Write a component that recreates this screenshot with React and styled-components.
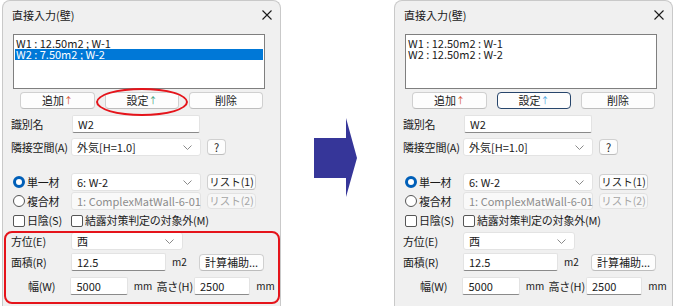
import React from 'react';
import styled, { createGlobalStyle, css } from 'styled-components';

const GlobalStyle = createGlobalStyle`
  html, body {
    margin: 0;
    padding: 0;
    background: #ffffff;
  }
  body {
    width: 674px;
    height: 306px;
    overflow: hidden;
    font-family: "Noto Sans CJK JP", "Noto Sans", sans-serif;
    font-size: 11px;
    color: #1a1a1a;
  }
`;

const Page = styled.div`
  display: flex;
  align-items: flex-start;
  padding-left: 2px;
`;

const Dialog = styled.div`
  position: relative;
  box-sizing: border-box;
  width: 279px;
  height: 306px;
  background: #f0f0f0;
  border: 1px solid #c9c9c9;
  border-bottom: none;
  border-radius: 8px 8px 0 0;
`;

const TitleBar = styled.div`
  display: flex;
  align-items: center;
  justify-content: space-between;
  height: 28px;
  padding: 0 8px 0 9px;
  font-size: 11px;
  line-height: 1;
`;

const Content = styled.div`
  display: flex;
  flex-direction: column;
  padding: 5px 0 0 8px;
`;

const ListBox = styled.div`
  box-sizing: border-box;
  width: 252px;
  height: 55px;
  margin-left: 2px;
  padding: 3px 1px 0;
  background: #ffffff;
  border: 1px solid #7f7f7f;
`;

const ListItem = styled.div`
  height: 11px;
  padding-left: 1px;
  font-size: 11px;
  line-height: 11px;
  white-space: nowrap;
  ${p => p.selected && css`
    background: #0078d7;
    color: #ffffff;
  `}
`;

const ButtonRow = styled.div`
  display: flex;
  gap: 10px;
  margin: 3px 0 0 9px;
`;

const Button = styled.div`
  box-sizing: border-box;
  display: flex;
  align-items: center;
  justify-content: center;
  width: ${p => p.w}px;
  height: ${p => p.h || 17}px;
  margin-left: ${p => p.ml || 0}px;
  background: #fdfdfd;
  border: 1px solid ${p => (p.focused ? '#27456b' : '#d0d0d0')};
  border-bottom-color: ${p => (p.focused ? '#27456b' : '#bdbdbd')};
  border-radius: 4px;
  font-size: ${p => p.fs || 11}px;
  line-height: 1;
  white-space: nowrap;
  color: ${p => (p.disabled ? '#a6a6a6' : '#1a1a1a')};
  ${p => p.disabled && css`
    background: #f7f7f7;
    border-color: #e2e2e2;
  `}
`;

const UpArrow = styled.span`
  margin-left: 0;
  font-size: 9px;
  color: ${p => p.c};
`;

const Row = styled.div`
  display: flex;
  align-items: center;
  height: ${p => p.h || 18}px;
  margin-top: ${p => p.mt}px;
`;

const Label = styled.div`
  box-sizing: border-box;
  width: ${p => p.w || 60}px;
  padding-left: ${p => p.pl || 0}px;
  font-size: 11px;
  letter-spacing: -0.2px;
  line-height: 1;
  white-space: nowrap;
`;

const Field = styled.div`
  box-sizing: border-box;
  display: flex;
  align-items: center;
  width: ${p => p.w}px;
  height: 18px;
  margin-left: ${p => p.ml || 0}px;
  padding-left: 5px;
  background: #ffffff;
  border: 1px solid #e3e3e3;
  border-bottom: 1px solid #8a8a8a;
  border-radius: 2px;
  font-size: 11px;
  line-height: 1;
`;

const Select = styled.div`
  box-sizing: border-box;
  display: flex;
  align-items: center;
  justify-content: space-between;
  width: ${p => p.w}px;
  height: 18px;
  padding: 0 8px 0 5px;
  background: ${p => (p.disabled ? '#f9f9f9' : '#ffffff')};
  border: 1px solid #e3e3e3;
  border-radius: 3px;
  font-size: 11px;
  line-height: 1;
  color: ${p => (p.disabled ? '#8c8c8c' : '#1a1a1a')};
  white-space: nowrap;
`;

const Unit = styled.div`
  box-sizing: border-box;
  width: ${p => p.w}px;
  padding-left: ${p => p.pl || 6}px;
  font-size: 10px;
  line-height: 1;
`;

const ChoiceLabel = styled.div`
  display: flex;
  align-items: center;
  gap: 2px;
  width: ${p => p.w || 60}px;
  margin-left: ${p => p.ml || 0}px;
  font-size: 11px;
  letter-spacing: -0.2px;
  line-height: 1;
  white-space: nowrap;
`;

const Radio = styled.span`
  box-sizing: border-box;
  flex: none;
  width: 12px;
  height: 12px;
  border-radius: 50%;
  background: #ffffff;
  border: ${p => (p.checked ? '3px solid #005fb8' : '1px solid #555555')};
`;

const Box = styled.span`
  box-sizing: border-box;
  flex: none;
  width: 12px;
  height: 12px;
  border: 1px solid #555555;
  border-radius: 2px;
  background: #ffffff;
`;

const RedEllipse = styled.div`
  position: absolute;
  left: 93px;
  top: 87px;
  width: 92px;
  height: 28px;
  border: 2px solid #e5141b;
  border-radius: 50%;
  box-sizing: border-box;
`;

const RedFrame = styled.div`
  position: absolute;
  left: 1px;
  top: 230px;
  width: 276px;
  height: 73px;
  border: 2px solid #e5141b;
  border-radius: 8px;
  box-sizing: border-box;
`;

const ArrowArea = styled.div`
  display: flex;
  width: 113px;
  padding: 118px 0 0 33px;
  box-sizing: border-box;
`;

const Chevron = () => (
  <svg width="9" height="5" viewBox="0 0 9 5">
    <polyline points="0.5,0.5 4.5,4.5 8.5,0.5" fill="none" stroke="#8a8a8a" strokeWidth="1" />
  </svg>
);

const Close = () => (
  <svg width="10" height="10" viewBox="0 0 10 10">
    <path d="M0.5 0.5 L9.5 9.5 M9.5 0.5 L0.5 9.5" stroke="#1a1a1a" strokeWidth="1.1" />
  </svg>
);

const WallDialog = ({ items, selected, focused, marked }) => (
  <Dialog>
    <TitleBar>
      <span>直接入力(壁)</span>
      <Close />
    </TitleBar>
    <Content>
      <ListBox>
        {items.map((t, i) => (
          <ListItem key={t} selected={i === selected}>{t}</ListItem>
        ))}
      </ListBox>
      <ButtonRow>
        <Button w={75}>追加<UpArrow c="#d4502a">↑</UpArrow></Button>
        <Button w={74} focused={focused}>設定<UpArrow c={focused ? '#4aa3df' : '#3a9a7a'}>↑</UpArrow></Button>
        <Button w={74}>削除</Button>
      </ButtonRow>
      <Row mt={6}>
        <Label>識別名</Label>
        <Field w={128} ml={1}>W2</Field>
      </Row>
      <Row mt={5}>
        <Label>隣接空間(A)</Label>
        <Select w={130}>外気[H=1.0]<Chevron /></Select>
        <Button w={19} h={16} ml={6}>?</Button>
      </Row>
      <Row mt={17}>
        <ChoiceLabel ml={2} w={58}><Radio checked />単一材</ChoiceLabel>
        <Select w={130}>6: W-2<Chevron /></Select>
        <Button w={49} h={16} ml={6} fs={10.5}>リスト(1)</Button>
      </Row>
      <Row mt={1}>
        <ChoiceLabel ml={2} w={58}><Radio />複合材</ChoiceLabel>
        <Select w={130} disabled>1: ComplexMatWall-6-01<Chevron /></Select>
        <Button w={49} h={16} ml={6} fs={10.5} disabled>リスト(2)</Button>
      </Row>
      <Row mt={3} h={15}>
        <ChoiceLabel ml={2} w={58}><Box />日陰(S)</ChoiceLabel>
        <ChoiceLabel w={200}><Box />結露対策判定の対象外(M)</ChoiceLabel>
      </Row>
      <Row mt={4}>
        <Label>方位(E)</Label>
        <Select w={112}>西<Chevron /></Select>
      </Row>
      <Row mt={3}>
        <Label>面積(R)</Label>
        <Field w={95}>12.5</Field>
        <Unit w={33} pl={6}>m2</Unit>
        <Button w={65}>計算補助...</Button>
      </Row>
      <Row mt={6}>
        <Label pl={17}>幅(W)</Label>
        <Field w={58}>5000</Field>
        <Unit w={29}>mm</Unit>
        <Label w={38}>高さ(H)</Label>
        <Field w={57}>2500</Field>
        <Unit w={30}>mm</Unit>
      </Row>
    </Content>
    {marked && <RedEllipse />}
    {marked && <RedFrame />}
  </Dialog>
);

export default function App() {
  return (
    <>
      <GlobalStyle />
      <Page>
        <WallDialog
          items={['W1 : 12.50m2 ; W-1', 'W2 : 7.50m2 ; W-2']}
          selected={1}
          marked
        />
        <ArrowArea>
          <svg width="44" height="80" viewBox="0 0 44 80">
            <polygon points="0,20 32,20 32,0 43,40 32,79 32,60 0,60" fill="#363699" />
          </svg>
        </ArrowArea>
        <WallDialog
          items={['W1 : 12.50m2 : W-1', 'W2 : 12.50m2 : W-2']}
          selected={-1}
          focused
        />
      </Page>
    </>
  );
}
